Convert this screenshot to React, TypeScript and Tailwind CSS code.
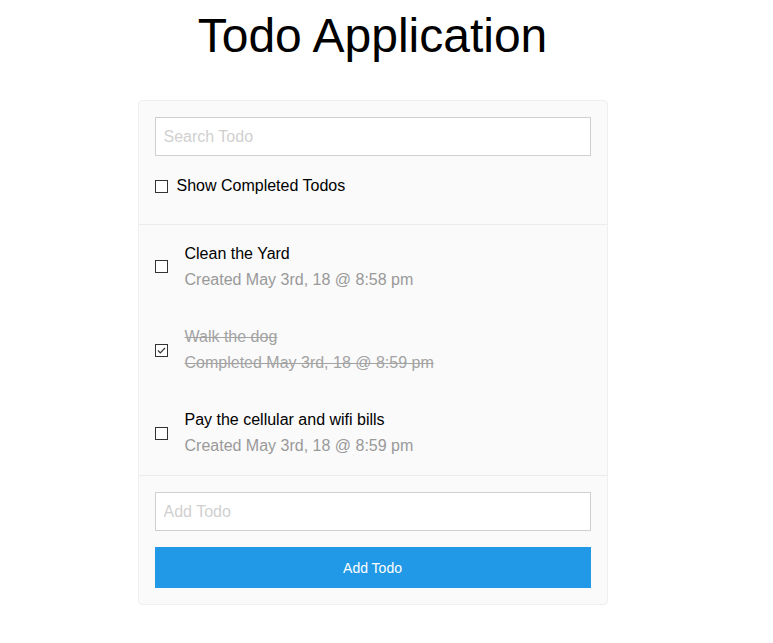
import { useState } from "react";

type Todo = {
    id: number;
    text: string;
    stamp: string;
    done: boolean;
};

// little square checkbox like the old desktop one
function Box({ checked, onClick }: { checked: boolean; onClick?: () => void }) {
    return (
        <span
            onClick={onClick}
            className="w-[13px] h-[13px] shrink-0 border border-[#333] bg-white flex items-center justify-center cursor-pointer"
        >
            {checked ? (
                <svg viewBox="0 0 11 11" className="w-[11px] h-[11px]" fill="none" stroke="#333" strokeWidth={1.2}>
                    <path d="M2 5.5 L4.3 7.8 L9 3" />
                </svg>
            ) : null}
        </span>
    );
}

export default function App() {
    const [search, setSearch] = useState("");
    const [newTodo, setNewTodo] = useState("");
    const [showCompleted, setShowCompleted] = useState(false);
    const [todos, setTodos] = useState<Todo[]>([
        { id: 1, text: "Clean the Yard", stamp: "Created May 3rd, 18 @ 8:58 pm", done: false },
        { id: 2, text: "Walk the dog", stamp: "Completed May 3rd, 18 @ 8:59 pm", done: true },
        { id: 3, text: "Pay the cellular and wifi bills", stamp: "Created May 3rd, 18 @ 8:59 pm", done: false },
    ]);

    const toggle = (id: number) =>
        setTodos(prev => prev.map(t => (t.id === id ? { ...t, done: !t.done } : t)));

    const addTodo = () => {
        if (!newTodo.trim()) return;
        setTodos(prev => [...prev, { id: Date.now(), text: newTodo, stamp: "Created just now", done: false }]);
        setNewTodo("");
    };

    return (
        <div className="min-h-screen bg-white font-['Liberation_Sans',Arial,sans-serif] text-black">
            <div className="w-[745px] flex flex-col items-center pt-[7px]">
                <h1 className="text-[48px] leading-[57px] font-normal">Todo Application</h1>

                <div className="w-[470px] mt-[36px] bg-[#fafafa] border border-[#efefef] rounded-[4px]">
                    {/* search + filter */}
                    <div className="px-4 pt-4 pb-[26px] border-b border-[#ececec]">
                        <input
                            type="text"
                            placeholder="Search Todo"
                            value={search}
                            onChange={e => setSearch(e.target.value)}
                            className="w-full h-[39px] px-2 bg-white border border-[#cfcfcf] text-base outline-none placeholder:text-[#d0d0d0]"
                        />
                        <label className="mt-[18px] h-6 flex items-center gap-[9px] text-base">
                            <Box checked={showCompleted} onClick={() => setShowCompleted(v => !v)} />
                            Show Completed Todos
                        </label>
                    </div>

                    {/* list */}
                    <div className="border-b border-[#ececec]">
                        {todos.map(t => (
                            <div key={t.id} className="h-[83.4px] px-4 flex items-center gap-[17px]">
                                <Box checked={t.done} onClick={() => toggle(t.id)} />
                                <div className={t.done ? "line-through text-[#a3a3a3]" : ""}>
                                    <p className="text-base leading-6">{t.text}</p>
                                    <p className={"text-base leading-6 mt-[2px] " + (t.done ? "" : "text-[#999]")}>{t.stamp}</p>
                                </div>
                            </div>
                        ))}
                    </div>

                    {/* add */}
                    <div className="p-4 flex flex-col gap-4">
                        <input
                            type="text"
                            placeholder="Add Todo"
                            value={newTodo}
                            onChange={e => setNewTodo(e.target.value)}
                            className="w-full h-[39px] px-2 bg-white border border-[#cfcfcf] text-base outline-none placeholder:text-[#d0d0d0]"
                        />
                        <button
                            onClick={addTodo}
                            className="w-full h-[41px] bg-[#2299e6] text-white text-sm"
                        >
                            Add Todo
                        </button>
                    </div>
                </div>
            </div>
        </div>
    );
}
